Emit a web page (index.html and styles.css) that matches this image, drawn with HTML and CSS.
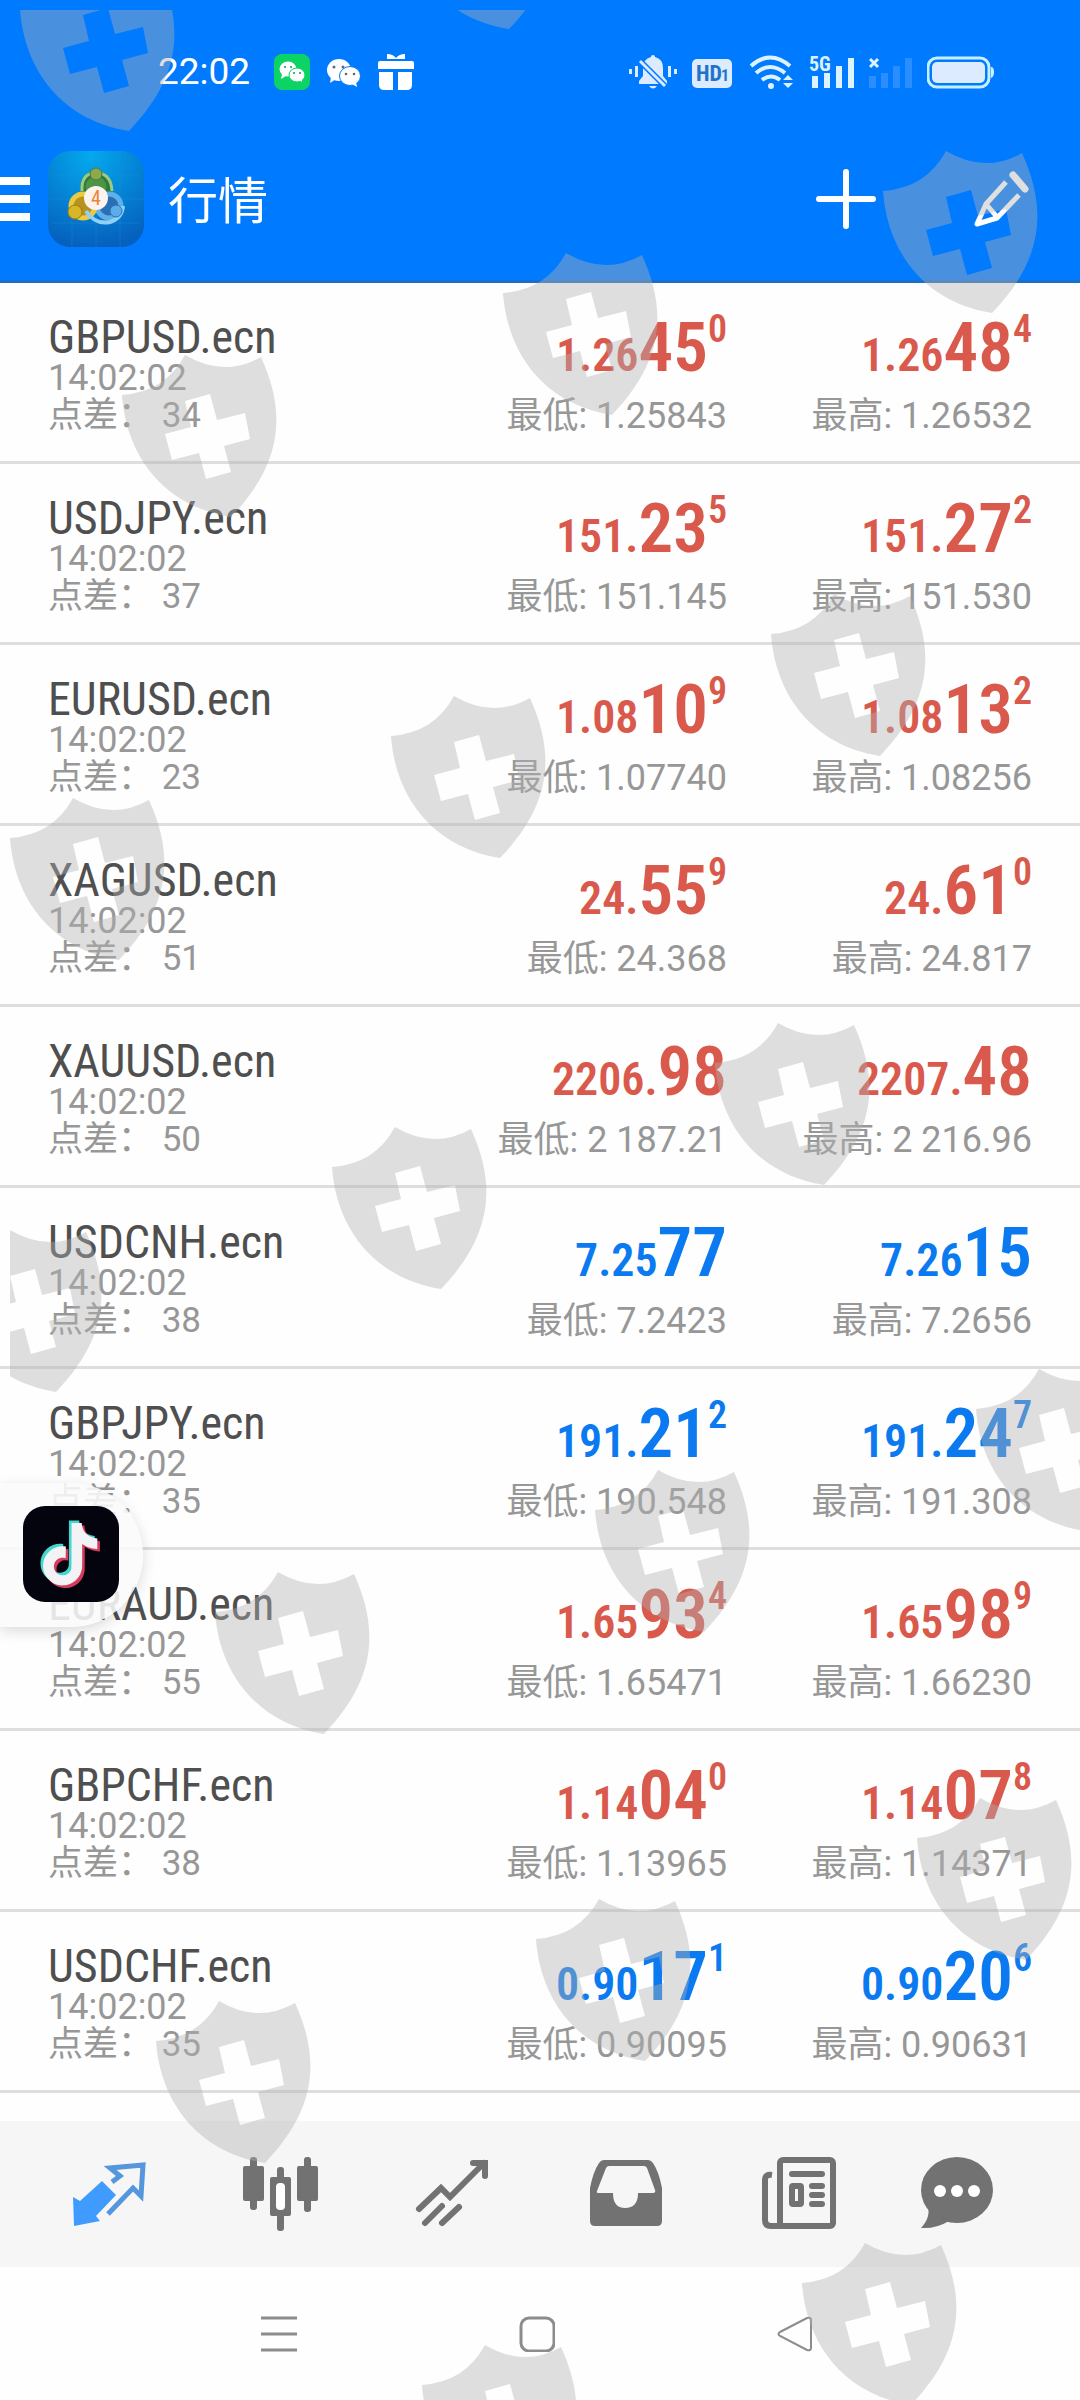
FILE: index.html
```
<!DOCTYPE html>
<html lang="zh-CN">
<head>
  <meta charset="UTF-8" />
  <meta name="viewport" content="width=device-width, initial-scale=1.0" />
  <title>行情</title>
  <link rel="stylesheet" href="styles.css">
</head>
<body>
  <header class="header">
    <!-- Status bar -->
    <div class="status">
      <span class="clock">22:02</span>
      <svg width="36" height="36" viewBox="0 0 36 36">
        <rect width="36" height="36" rx="8" fill="#0bd364"/>
        <ellipse cx="14" cy="15" rx="8.5" ry="7.5" fill="#fff"/>
        <path d="M8 20l-1 5 5-3z" fill="#fff"/>
        <ellipse cx="23" cy="21" rx="8" ry="7" fill="#fff" stroke="#0bd364"/>
        <path d="M25 26l3 2 0-4z" fill="#fff"/>
        <g fill="#0b9a50"><circle cx="11" cy="13" r="1"/><circle cx="17" cy="13" r="1"/><circle cx="20" cy="19" r="1"/><circle cx="26" cy="19" r="1"/></g>
      </svg>
      <svg width="34" height="36" viewBox="0 0 34 36">
        <ellipse cx="12" cy="16" rx="12" ry="11" fill="#fff"/>
        <path d="M4 23l-1 6 6-4z" fill="#fff"/>
        <ellipse cx="23" cy="22" rx="10.5" ry="9.5" fill="#fff" stroke="#007aff"/>
        <path d="M25 30l5 3-1-5z" fill="#fff"/>
        <g fill="#5b6b80"><circle cx="7" cy="13" r="1.5"/><circle cx="16" cy="13" r="1.5"/><circle cx="19" cy="20" r="1.3"/><circle cx="27" cy="20" r="1.3"/></g>
      </svg>
      <svg width="36" height="36" viewBox="0 0 36 36" fill="#fff">
        <path d="M9 0q6 0 9 4 3-4 9-4v5H9z"/>
        <path d="M2 7h14v8H0V9q0-2 2-2zM20 7h14q2 0 2 2v6H20zM1 18h14v18H6q-5 0-5-5zM20 18h14v13q0 5-5 5h-9z"/>
        <path d="M14 7h8v8h-8z"/>
      </svg>
      <div class="status-right">
        <svg width="48" height="34" viewBox="0 0 48 34" fill="#dcebff">
          <path d="M24 0q2 0 2 2 8 2 8 11v8l4 5v3H10v-3l4-5v-8q0-9 8-11 0-2 2-2zM20 31h8q-4 5-8 0z"/>
          <path d="M10 5L37 32" stroke="#007aff" stroke-width="6"/>
          <path d="M11 6L36 31" stroke="#dcebff" stroke-width="3"/>
          <path d="M0 14h3v5H0zM6 11h3v11H6zM39 11h3v11h-3zM45 14h3v5h-3z"/>
        </svg>
        <svg width="40" height="34" viewBox="0 0 40 34">
          <rect y="4" width="40" height="29" rx="5" fill="#dcebff"/>
          <text x="4" y="26" class="hd">HD</text>
          <text x="29" y="26" class="hd-one">1</text>
        </svg>
        <svg width="47" height="34" viewBox="0 0 47 34" fill="none" stroke="#dcf2ff" stroke-width="4">
          <path d="M4 11q19-17 39 0M9 18q14-12 29 0M15 25q9-7 18 0"/>
          <circle cx="24" cy="31" r="3" fill="#dcf2ff" stroke="none"/>
          <path d="M36 25l5-5 5 5zM36 28l5 5 5-5z" fill="#dcf2ff" stroke="none"/>
        </svg>
        <svg width="45" height="34" viewBox="0 0 45 34" fill="#dcf2ff">
          <text x="0" y="16" class="net">5G</text>
          <path d="M3 21h6v12H3zM15 18h6v15h-6zM27 11h6v22h-6zM39 3h6v30h-6z"/>
        </svg>
        <svg width="43" height="34" viewBox="0 0 43 34" fill="#2b8eff">
          <path d="M1 4l8 8M9 4l-8 8" stroke="#dcf2ff" stroke-width="3"/>
          <path d="M0 21h7v12H0zM12 18h7v15h-7zM24 11h7v22h-7zM36 3h7v30h-7z"/>
        </svg>
        <svg width="67" height="34" viewBox="0 0 67 34">
          <rect x="1" y="3" width="61" height="29" rx="9" fill="none" stroke="#c4f0ff" stroke-width="3"/>
          <rect x="5" y="7" width="53" height="21" rx="5" fill="#dcebff"/>
          <path d="M64 12q3 0 3 5t-3 6z" fill="#c4f0ff"/>
        </svg>
      </div>
    </div>

    <!-- App bar -->
    <div class="appbar">
      <button class="icon-btn" aria-label="菜单">
        <svg width="30" height="44" viewBox="0 0 30 44" fill="#fff"><path d="M0 0h30v8H0zM0 18h30v8H0zM0 36h30v8H0z"/></svg>
      </button>
      <svg class="logo" width="96" height="96" viewBox="0 0 96 96">
        <defs>
          <radialGradient id="logoBg" cx="45%" cy="5%" r="95%">
            <stop offset="0" stop-color="#04a9ee"/>
            <stop offset="1" stop-color="#0561bd"/>
          </radialGradient>
        </defs>
        <rect width="96" height="96" rx="22" fill="url(#logoBg)"/>
        <path d="M4 24h88M0 48h96M4 72h88M24 0v96M48 0v96M72 0v96" stroke="#2a92dc" stroke-opacity=".3"/>
        <circle cx="48" cy="36" r="13" fill="#4f9444" stroke="#2f7a3c" stroke-width="5"/>
        <path d="M34 40q-1-18 14-18 15 0 16 18" fill="none" stroke="#9ccb7c" stroke-width="3"/>
        <circle cx="61" cy="55" r="12" fill="#2a6fb4" stroke="#5fb0ea" stroke-width="5"/>
        <circle cx="35" cy="55" r="12" fill="#b8921f" stroke="#e8cb42" stroke-width="5"/>
        <path d="M38 60q9 14 24 11 12-4 13-16" fill="none" stroke="#8fd0f7" stroke-width="4"/>
        <circle cx="48" cy="23" r="6" fill="#8da84f" stroke="#4f7c2e"/>
        <circle cx="27" cy="61" r="7" fill="#d8b727" stroke="#9c7c12"/>
        <circle cx="68" cy="60" r="6" fill="#5cabea" stroke="#2c71b0"/>
        <circle cx="48" cy="47" r="12" fill="#fbf4ee"/>
        <text x="48" y="54" class="logo-num">4</text>
      </svg>
      <h1 class="title">行情</h1>
      <div class="actions">
        <button class="icon-btn" aria-label="添加">
          <svg width="60" height="60" viewBox="0 0 60 60" stroke="#fff" stroke-width="6" stroke-linecap="round"><path d="M30 3v54M3 30h54"/></svg>
        </button>
        <button class="icon-btn" aria-label="编辑">
          <svg width="56" height="56" viewBox="0 0 56 56" fill="none" stroke="#fff" stroke-width="5" stroke-linejoin="round">
            <path d="M32 11L12 33 3 53l20-6 22-23M12 33l11 13"/>
            <path d="M39 4l12 14" stroke-width="7" stroke-linecap="round"/>
          </svg>
        </button>
      </div>
    </div>
  </header>

  <main class="main">
    <table class="quotes">
      <tr>
        <td><div class="name">GBPUSD.ecn</div><div class="info">14:02:02</div><div class="info spread">点差： 34</div></td>
        <td><div class="price down">1.26<b>45</b><sup>0</sup></div><div class="info">最低: 1.25843</div></td>
        <td><div class="price down">1.26<b>48</b><sup>4</sup></div><div class="info">最高: 1.26532</div></td>
      </tr>
      <tr>
        <td><div class="name">USDJPY.ecn</div><div class="info">14:02:02</div><div class="info spread">点差： 37</div></td>
        <td><div class="price down">151.<b>23</b><sup>5</sup></div><div class="info">最低: 151.145</div></td>
        <td><div class="price down">151.<b>27</b><sup>2</sup></div><div class="info">最高: 151.530</div></td>
      </tr>
      <tr>
        <td><div class="name">EURUSD.ecn</div><div class="info">14:02:02</div><div class="info spread">点差： 23</div></td>
        <td><div class="price down">1.08<b>10</b><sup>9</sup></div><div class="info">最低: 1.07740</div></td>
        <td><div class="price down">1.08<b>13</b><sup>2</sup></div><div class="info">最高: 1.08256</div></td>
      </tr>
      <tr>
        <td><div class="name">XAGUSD.ecn</div><div class="info">14:02:02</div><div class="info spread">点差： 51</div></td>
        <td><div class="price down">24.<b>55</b><sup>9</sup></div><div class="info">最低: 24.368</div></td>
        <td><div class="price down">24.<b>61</b><sup>0</sup></div><div class="info">最高: 24.817</div></td>
      </tr>
      <tr>
        <td><div class="name">XAUUSD.ecn</div><div class="info">14:02:02</div><div class="info spread">点差： 50</div></td>
        <td><div class="price down">2206.<b>98</b></div><div class="info">最低: 2 187.21</div></td>
        <td><div class="price down">2207.<b>48</b></div><div class="info">最高: 2 216.96</div></td>
      </tr>
      <tr>
        <td><div class="name">USDCNH.ecn</div><div class="info">14:02:02</div><div class="info spread">点差： 38</div></td>
        <td><div class="price up">7.25<b>77</b></div><div class="info">最低: 7.2423</div></td>
        <td><div class="price up">7.26<b>15</b></div><div class="info">最高: 7.2656</div></td>
      </tr>
      <tr>
        <td><div class="name">GBPJPY.ecn</div><div class="info">14:02:02</div><div class="info spread">点差： 35</div></td>
        <td><div class="price up">191.<b>21</b><sup>2</sup></div><div class="info">最低: 190.548</div></td>
        <td><div class="price up">191.<b>24</b><sup>7</sup></div><div class="info">最高: 191.308</div></td>
      </tr>
      <tr>
        <td><div class="name">EURAUD.ecn</div><div class="info">14:02:02</div><div class="info spread">点差： 55</div></td>
        <td><div class="price down">1.65<b>93</b><sup>4</sup></div><div class="info">最低: 1.65471</div></td>
        <td><div class="price down">1.65<b>98</b><sup>9</sup></div><div class="info">最高: 1.66230</div></td>
      </tr>
      <tr>
        <td><div class="name">GBPCHF.ecn</div><div class="info">14:02:02</div><div class="info spread">点差： 38</div></td>
        <td><div class="price down">1.14<b>04</b><sup>0</sup></div><div class="info">最低: 1.13965</div></td>
        <td><div class="price down">1.14<b>07</b><sup>8</sup></div><div class="info">最高: 1.14371</div></td>
      </tr>
      <tr>
        <td><div class="name">USDCHF.ecn</div><div class="info">14:02:02</div><div class="info spread">点差： 35</div></td>
        <td><div class="price up">0.90<b>17</b><sup>1</sup></div><div class="info">最低: 0.90095</div></td>
        <td><div class="price up">0.90<b>20</b><sup>6</sup></div><div class="info">最高: 0.90631</div></td>
      </tr>
    </table>
  </main>

  <!-- Tabs -->
  <nav class="tabs">
    <button class="icon-btn" aria-label="行情">
      <svg width="100" height="80" viewBox="0 0 100 80">
        <path d="M14 43L21 47L43 27L57 41L37 62L41 67L15 72Z" fill="#409bff"/>
        <path d="M53 28L61 22L51 14L84 11L82 42L74 34L49 60" fill="none" stroke="#5597dc" stroke-width="5"/>
      </svg>
    </button>
    <button class="icon-btn" aria-label="图表">
      <svg width="100" height="80" viewBox="0 0 100 80" fill="#727272">
        <rect x="12" y="12" width="21" height="35" rx="2"/><rect x="19" y="3" width="7" height="53" rx="3"/>
        <rect x="66" y="12" width="21" height="35" rx="2"/><rect x="73" y="3" width="7" height="55" rx="3"/>
        <rect x="46" y="13" width="7" height="64" rx="3"/><rect x="39" y="23" width="21" height="39" rx="2"/>
        <rect x="45" y="29" width="9" height="27" rx="4" fill="#fff"/>
      </svg>
    </button>
    <button class="icon-btn" aria-label="交易">
      <svg width="100" height="80" viewBox="0 0 100 80" fill="none" stroke="#727272" stroke-width="6" stroke-linecap="round">
        <path d="M15 55L37 34L46 43L80 9M69 9H81V22M21 69L38 52M38 69L55 53"/>
      </svg>
    </button>
    <button class="icon-btn" aria-label="历史">
      <svg width="100" height="80" viewBox="0 0 100 80">
        <path fill="#727272" fill-rule="evenodd" d="M14 34Q17 18 23 9Q25 6 28 6H72Q75 6 77 9Q83 18 86 34V67Q86 72 81 72H19Q14 72 14 67ZM33 12Q31 12 30 14L21 37Q20 39 23 39H37Q37 54 49 54Q62 54 62 39H77Q80 39 79 36L71 14Q70 12 68 12Z"/>
      </svg>
    </button>
    <button class="icon-btn" aria-label="新闻">
      <svg width="100" height="80" viewBox="0 0 100 80" fill="none" stroke="#727272" stroke-width="6">
        <rect x="32" y="6" width="53" height="66" rx="3"/>
        <path d="M24 21Q17 20 17 26V66Q17 72 23 72H34"/>
        <path d="M44 20H74M64 32H74M64 41H74M64 50H74" stroke-linecap="round"/>
        <rect x="44" y="32" width="9" height="18" rx="1"/>
      </svg>
    </button>
    <button class="icon-btn" aria-label="消息">
      <svg width="100" height="80" viewBox="0 0 100 80" fill="#727272">
        <ellipse cx="36" cy="36" rx="36" ry="33"/>
        <path d="M6 50Q11 62 0 74Q15 75 28 67Z"/>
        <g fill="#fff"><circle cx="19" cy="37" r="6"/><circle cx="36" cy="37" r="6"/><circle cx="53" cy="37" r="6"/></g>
      </svg>
    </button>
  </nav>

  <!-- System navigation -->
  <nav class="sysnav">
    <button class="icon-btn" aria-label="最近任务">
      <svg width="36" height="36" viewBox="0 0 36 36" stroke="#8c8c8c" stroke-width="3"><path d="M0 2h36M0 18h36M0 34h36"/></svg>
    </button>
    <button class="icon-btn" aria-label="主页">
      <svg width="36" height="36" viewBox="0 0 36 36" fill="none" stroke="#8c8c8c" stroke-width="3"><rect x="2" y="2" width="33" height="33" rx="8"/></svg>
    </button>
    <button class="icon-btn" aria-label="返回">
      <svg width="36" height="36" viewBox="0 0 36 36" fill="none" stroke="#8c8c8c" stroke-width="2"><path d="M3 16L30 2Q34 1 34 4V32Q34 35 30 34L3 20Q0 18 3 16Z"/></svg>
    </button>
  </nav>

  <!-- Floating shortcut -->
  <button class="bubble" aria-label="抖音">
    <svg width="96" height="96" viewBox="0 0 96 96">
      <defs>
        <path id="note" d="M12.525.02c1.31-.02 2.61-.01 3.91-.02.08 1.53.63 3.09 1.75 4.17 1.12 1.11 2.7 1.62 4.24 1.79v4.03c-1.44-.05-2.89-.35-4.2-.97-.57-.26-1.1-.59-1.62-.93-.01 2.92.01 5.84-.02 8.75-.08 1.4-.54 2.79-1.35 3.94-1.31 1.92-3.58 3.17-5.91 3.21-1.43.08-2.86-.31-4.08-1.03-2.02-1.19-3.44-3.37-3.65-5.71-.02-.5-.03-1-.01-1.49.18-1.9 1.12-3.72 2.58-4.96 1.66-1.44 3.98-2.13 6.15-1.72.02 1.48-.04 2.96-.04 4.44-.99-.32-2.15-.23-3.02.37-.63.41-1.11 1.04-1.36 1.75-.21.51-.15 1.07-.14 1.61.24 1.64 1.82 3.02 3.5 2.87 1.12-.01 2.19-.66 2.77-1.61.19-.33.4-.67.41-1.06.1-1.79.06-3.57.07-5.36.01-4.03-.01-8.05.02-12.07z"/>
      </defs>
      <rect width="96" height="96" rx="22" fill="#04040f"/>
      <g transform="translate(16 17) scale(2.6)">
        <use href="#note" x="-1" y="-1" fill="#45d5cf"/>
        <use href="#note" x="1" y="1" fill="#d63a5c"/>
        <use href="#note" fill="#f3f3f6"/>
      </g>
    </svg>
  </button>

  <!-- Shield overlay -->
  <svg class="shields" aria-hidden="true">
    <defs>
      <path id="shield" fill-rule="evenodd" d="M0 41Q43 38 63 1Q102 24 139 3C165 60 160 110 109 163C40 152 4 100 0 41ZM63 47L88 40L95 66L123 59L128 85L102 92L109 118L84 125L77 99L50 106L43 80L69 73Z"/>
    </defs>
    <use href="#shield" x="10" y="-42"/>
    <use href="#shield" x="390" y="-144"/>
    <use href="#shield" x="873" y="140"/>
    <use href="#shield" x="493" y="242"/>
    <use href="#shield" x="112" y="344"/>
    <use href="#shield" x="761" y="583"/>
    <use href="#shield" x="381" y="685"/>
    <use href="#shield" x="0" y="787"/>
    <use href="#shield" x="705" y="1012"/>
    <use href="#shield" x="322" y="1116"/>
    <use href="#shield" x="-63" y="1219"/>
    <use href="#shield" x="966" y="1358"/>
    <use href="#shield" x="585" y="1459"/>
    <use href="#shield" x="205" y="1561"/>
    <use href="#shield" x="907" y="1787"/>
    <use href="#shield" x="526" y="1888"/>
    <use href="#shield" x="146" y="1990"/>
    <use href="#shield" x="792" y="2232"/>
    <use href="#shield" x="412" y="2334"/>
  </svg>
</body>
</html>
```
FILE: styles.css
```
* {
  box-sizing: border-box;
  margin: 0;
  padding: 0;
}
body {
  position: relative;
  display: flex;
  flex-direction: column;
  min-height: 100vh;
  overflow: hidden;
  background: #fefefe;
  font-family: Roboto, "Noto Sans CJK SC", sans-serif;
}
svg {
  display: block;
  flex: none;
}
.icon-btn {
  background: none;
  border: 0;
  cursor: pointer;
}

/* header */
.header {
  background: #007aff;
  border-bottom: 3px solid #1a6fc8;
  color: #fff;
  padding-bottom: 26px;
}
.status {
  display: flex;
  align-items: center;
  gap: 17px;
  height: 144px;
  padding: 0 86px 0 158px;
}
.clock {
  font-size: 37px;
  line-height: 44px;
  margin-right: 7px;
}
.status-right {
  display: flex;
  gap: 15px;
  margin-left: auto;
}
.hd, .hd-one {
  font-family: "Roboto Condensed", sans-serif;
  font-weight: 700;
  font-size: 22px;
  fill: #1f74c9;
}
.hd-one {
  font-size: 16px;
}
.net {
  font-family: "Roboto Condensed", sans-serif;
  font-weight: 700;
  font-size: 20px;
}
.appbar {
  display: flex;
  align-items: center;
  height: 110px;
}
.logo {
  margin: 0 24px 0 18px;
}
.logo-num {
  font-family: "Roboto Condensed", sans-serif;
  font-size: 20px;
  fill: #ee8434;
  text-anchor: middle;
}
.title {
  font-size: 50px;
  font-weight: 400;
  line-height: 60px;
  padding-top: 6px;
}
.actions {
  display: flex;
  align-items: center;
  gap: 98px;
  margin-left: auto;
  padding-right: 50px;
}

/* quotes */
.main {
  flex: 1;
}
.quotes {
  width: 100%;
  table-layout: fixed;
  border-collapse: separate;
  border-spacing: 0;
}
.quotes td {
  border-bottom: 3px solid #dedede;
  padding: 32px 0 26px;
  text-align: right;
  vertical-align: top;
  white-space: nowrap;
}
.quotes td:first-child {
  padding-left: 48px;
  text-align: left;
}
.quotes td:last-child {
  width: 353px;
  padding-right: 48px;
}
.name {
  font-family: "Roboto Condensed", sans-serif;
  font-size: 46px;
  line-height: 44px;
  color: #4f4f4f;
}
.info {
  font-size: 36px;
  line-height: 38px;
  color: #979797;
}
.spread {
  font-size: 35px;
}
.price {
  font-family: "Roboto Condensed", sans-serif;
  font-size: 46px;
  font-weight: 600;
  line-height: 46px;
  margin-bottom: 16px;
}
.price b {
  font-size: 69px;
  font-weight: 600;
  line-height: 66px;
}
.price sup {
  font-size: 38px;
  line-height: 0;
  vertical-align: 29px;
}
.down {
  color: #d95a4c;
}
.up {
  color: #0b7af0;
}

/* bottom bars */
.tabs {
  display: grid;
  grid-template-columns: repeat(6, 1fr);
  justify-items: center;
  align-items: center;
  height: 146px;
  padding: 0 23px;
  background: #f6f6f6;
}
.sysnav {
  display: grid;
  grid-template-columns: repeat(3, 1fr);
  justify-items: center;
  align-items: center;
  height: 133px;
  padding: 0 156px 0 150px;
}

/* overlays */
.bubble {
  position: absolute;
  top: 1483px;
  left: 0;
  padding: 23px 24px 25px 23px;
  border: 0;
  border-radius: 0 72px 72px 0;
  background: rgba(250, 250, 250, 0.88);
  box-shadow: 0 4px 14px rgba(0, 0, 0, 0.14);
}
.shields {
  position: absolute;
  top: 10px;
  left: 10px;
  width: calc(100% - 10px);
  height: calc(100% - 10px);
  fill: #b2b2b2;
  opacity: 0.41;
  pointer-events: none;
}
```
